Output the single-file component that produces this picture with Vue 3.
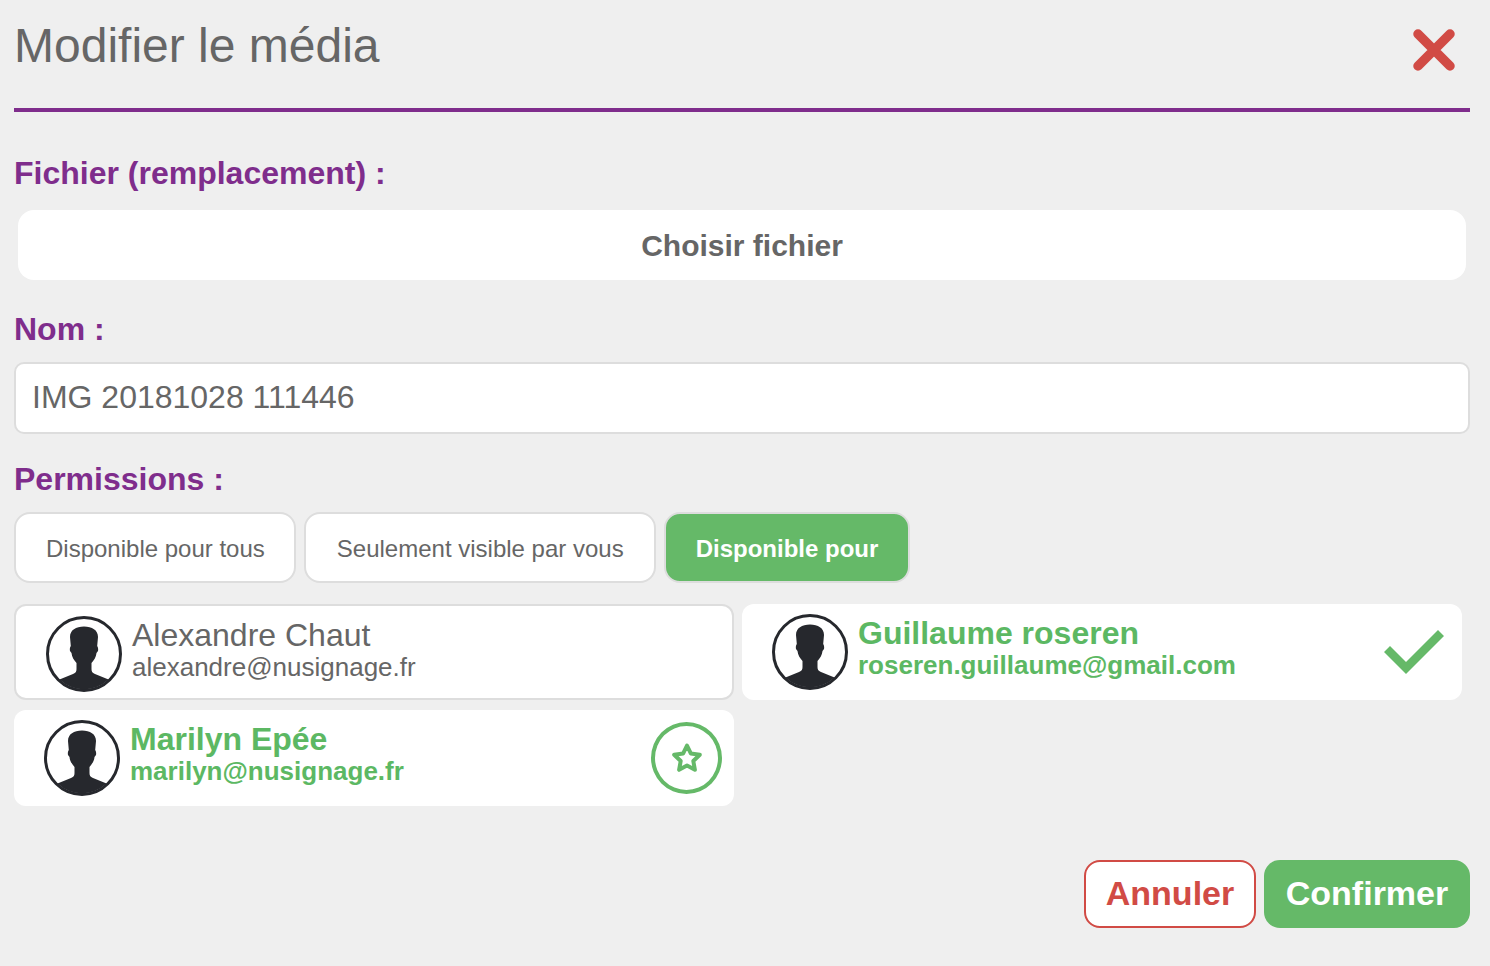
<script setup>
const users = [
  { name: 'Alexandre Chaut', email: 'alexandre@nusignage.fr', kind: 'plain' },
  { name: 'Guillaume roseren', email: 'roseren.guillaume@gmail.com', kind: 'checked' },
  { name: 'Marilyn Epée', email: 'marilyn@nusignage.fr', kind: 'star' }
]
</script>

<template>
  <div class="modal">
    <header class="head">
      <h1 class="title">Modifier le média</h1>
      <svg class="close" viewBox="0 0 42 42" width="42" height="42" aria-label="Fermer">
        <path d="M5 5 37 37M37 5 5 37" fill="none" stroke="#d14b45" stroke-width="9.5" stroke-linecap="round" />
      </svg>
    </header>

    <label class="label first">Fichier (remplacement) :</label>
    <button class="file">Choisir fichier</button>

    <label class="label name-label">Nom :</label>
    <div class="input">IMG 20181028 111446</div>

    <label class="label perm-label">Permissions :</label>
    <div class="perms">
      <button class="perm">Disponible pour tous</button>
      <button class="perm">Seulement visible par vous</button>
      <button class="perm active">Disponible pour</button>
    </div>

    <div class="users">
      <div v-for="u in users" :key="u.email" class="user" :class="u.kind">
        <svg class="avatar" viewBox="0 0 76 76" width="76" height="76">
          <circle cx="38" cy="38" r="36.5" fill="#fff" stroke="#26282d" stroke-width="3" />
          <path d="M13.500 63.500 L27 58 C30 57 30.500 55 30.500 53 L30.500 47 C28 44 25.800 41 25.500 37 L24 35 C23.600 33 24 31 24.800 30 L24 21 C24 14 30 10.500 38 10.500 C46 10.500 52 14 52 21 L51.200 30 C52 31 52.400 33 52 35 L50.500 37 C50.200 41 48 44 45.500 47 L45.500 53 C45.500 55 46 57 49 58 L62.500 63.500 A35.500 35.500 0 0 1 13.500 63.500 Z" fill="#26282d" />
        </svg>
        <div class="info">
          <div class="uname">{{ u.name }}</div>
          <div class="email">{{ u.email }}</div>
        </div>
        <svg v-if="u.kind === 'checked'" class="check" viewBox="0 0 60 44" width="60" height="44">
          <path d="M0 22 6 16 22 32 54 0 60 6 22 44 Z" fill="#65b968" />
        </svg>
        <span v-if="u.kind === 'star'" class="star-btn">
          <svg viewBox="0 0 32 32" width="32" height="32">
            <path d="M16 3.500 19.800 11.400 28.800 12.700 22.300 19 23.900 27.800 16 23.600 8.100 27.800 9.700 19 3.200 12.700 12.200 11.400 Z" fill="none" stroke="#65b968" stroke-width="4" stroke-linejoin="round" />
          </svg>
        </span>
      </div>
    </div>

    <footer class="foot">
      <button class="btn cancel">Annuler</button>
      <button class="btn confirm">Confirmer</button>
    </footer>
  </div>
</template>

<style>
html, body { margin: 0; background: #efefef; }
</style>

<style scoped>
.modal {
  box-sizing: border-box;
  width: 1490px;
  height: 966px;
  padding: 0 20px 0 14px;
  background: #efefef;
  color: #666;
  font-family: "Liberation Sans", Arial, sans-serif;
  overflow: hidden;
}
.head {
  height: 108px;
  box-sizing: content-box;
  border-bottom: 4px solid #7f2d8c;
  display: flex;
  justify-content: space-between;
  align-items: flex-start;
}
.title {
  margin: 18px 0 0 0;
  font-size: 48px;
  line-height: 56px;
  font-weight: 400;
  color: #666;
}
.close { margin: 29px 15px 0 0; }
.label {
  display: block;
  font-size: 32px;
  line-height: 36px;
  font-weight: 700;
  color: #7f2d8c;
}
.first { margin-top: 43px; }
.file {
  display: block;
  box-sizing: border-box;
  width: 1448px;
  height: 70px;
  margin: 19px 0 0 4px;
  padding: 2px 0 0;
  border: 0;
  border-radius: 16px;
  background: #fff;
  color: #666;
  font: 700 30px "Liberation Sans", Arial, sans-serif;
}
.name-label { margin-top: 31px; }
.input {
  box-sizing: border-box;
  height: 72px;
  margin-top: 15px;
  padding-left: 16px;
  background: #fff;
  border: 2px solid #ddd;
  border-radius: 10px;
  font-size: 32px;
  line-height: 66px;
  color: #666;
}
.perm-label { margin-top: 27px; }
.perms {
  display: flex;
  gap: 8px;
  margin-top: 15px;
}
.perm {
  box-sizing: border-box;
  height: 71px;
  padding: 3px 30px 0;
  background: #fff;
  border: 2px solid #ddd;
  border-radius: 16px;
  color: #666;
  font: 400 24px "Liberation Sans", Arial, sans-serif;
}
.perm:nth-child(1) { padding-right: 29px; }
.perm:nth-child(2) { padding-left: 31px; }
.perm.active {
  background: #65b968;
  color: #fff;
  font-weight: 700;
}
.users {
  display: grid;
  grid-template-columns: 720px 720px;
  column-gap: 8px;
  row-gap: 10px;
  margin-top: 21px;
}
.user {
  box-sizing: border-box;
  height: 96px;
  background: #fff;
  border-radius: 12px;
  display: flex;
  align-items: center;
  padding: 0 12px 0 30px;
  color: #5cb863;
  font-weight: 700;
}
.user.plain {
  border: 2px solid #ddd;
  padding-top: 4px;
  color: #666;
  font-weight: 400;
}
.avatar { flex: none; margin-right: 10px; }
.info { flex: 1; margin-top: -10px; }
.uname { font-size: 32px; line-height: 36px; }
.email { font-size: 26px; line-height: 28px; }
.check { margin: 0 6px 0 0; }
.star-btn {
  box-sizing: border-box;
  width: 71px;
  height: 72px;
  border: 4px solid #65b968;
  border-radius: 50%;
  display: flex;
  align-items: center;
  justify-content: center;
  margin-right: 0;
}
.foot {
  display: flex;
  justify-content: flex-end;
  gap: 8px;
  margin-top: 54px;
}
.btn {
  box-sizing: border-box;
  height: 68px;
  padding: 0 0 2px;
  border-radius: 16px;
  font: 700 34px "Liberation Sans", Arial, sans-serif;
}
.cancel {
  width: 172px;
  background: #fff;
  border: 2px solid #d14b45;
  color: #d14b45;
}
.confirm {
  width: 206px;
  background: #65b968;
  border: 0;
  color: #fff;
}
</style>
